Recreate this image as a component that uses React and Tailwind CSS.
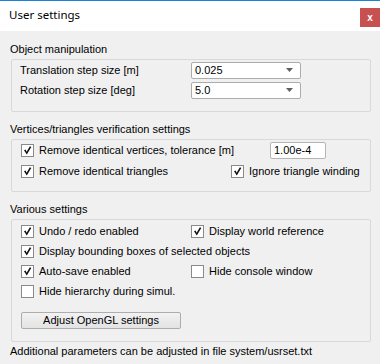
import React from "react";

function Check({ checked }) {
  return (
    <span className="w-[13px] h-[13px] shrink-0 bg-white border border-[#8a8a8a] flex items-center justify-center">
      {checked && (
        <svg width="11" height="11" viewBox="0 0 11 11">
          <polygon points="2,5.2 3.6,4.6 4.6,6.8 7.9,1.2 9.3,1.9 4.8,9.6" fill="#111" />
        </svg>
      )}
    </span>
  );
}

function CB({ checked, label, w }) {
  return (
    <div className={"flex items-center gap-[5px] " + (w || "")}>
      <Check checked={checked} />
      <span>{label}</span>
    </div>
  );
}

function Combo({ value }) {
  return (
    <div className="w-[110px] h-[17px] bg-white border border-[#acacac] rounded-[2px] flex items-center justify-between pl-[3px] pr-[7px]">
      <span>{value}</span>
      <svg width="7" height="4" viewBox="0 0 7 4">
        <polygon points="0,0 7,0 3.5,4" fill="#606060" />
      </svg>
    </div>
  );
}

export default function App() {
  return (
    <div className="w-[380px] h-[364px] bg-[#f0f0f0] text-[11px] leading-[13px] text-black font-['Liberation_Sans',Arial,sans-serif] overflow-hidden">
      <div className="h-[31px] border-t border-[#1883d7] bg-white flex items-start justify-between">
        <span className="font-['Noto_Sans',sans-serif] text-[11.5px] leading-[16px] mt-[6px] ml-[9px]">User settings</span>
        <div className="w-[20px] h-[19px] mt-[7px] bg-[#c75050] flex items-center justify-center text-white text-[10px] font-bold leading-none">
          x
        </div>
      </div>
      <div className="pl-[10px] pt-[12px] flex flex-col">
        <div>Object manipulation</div>
        <div className="mt-[3px] ml-[1px] w-[360px] border border-[#d9d9d9] rounded-[2px] pl-[8px] pb-[11px] flex flex-col">
          <div className="h-[20px] flex items-center">
            <span className="w-[171px]">Translation step size [m]</span>
            <Combo value="0.025" />
          </div>
          <div className="h-[20px] flex items-center">
            <span className="w-[171px]">Rotation step size [deg]</span>
            <Combo value="5.0" />
          </div>
        </div>

        <div className="mt-[11px]">Vertices/triangles verification settings</div>
        <div className="mt-[3px] ml-[1px] w-[360px] border border-[#d9d9d9] rounded-[2px] pl-[9px] pb-[10px] flex flex-col gap-[1px]">
          <div className="h-[20px] flex items-center">
            <CB checked label="Remove identical vertices, tolerance [m]" w="w-[249px]" />
            <div className="w-[56px] h-[17px] bg-white border border-[#b5b5b5] rounded-[2px] flex items-center pl-[3px]">1.00e-4</div>
          </div>
          <div className="h-[20px] flex items-center">
            <CB checked label="Remove identical triangles" w="w-[210px]" />
            <CB checked label="Ignore triangle winding" />
          </div>
        </div>

        <div className="mt-[11px]">Various settings</div>
        <div className="mt-[3px] ml-[1px] w-[360px] border border-[#d9d9d9] rounded-[2px] pl-[9px] pt-[1px] pb-[12px] flex flex-col">
          <div className="h-[20px] flex items-center">
            <CB checked label="Undo / redo enabled" w="w-[170px]" />
            <CB checked label="Display world reference" />
          </div>
          <div className="h-[20px] flex items-center">
            <CB checked label="Display bounding boxes of selected objects" />
          </div>
          <div className="h-[20px] flex items-center">
            <CB checked label="Auto-save enabled" w="w-[170px]" />
            <CB checked={false} label="Hide console window" />
          </div>
          <div className="h-[20px] flex items-center">
            <CB checked={false} label="Hide hierarchy during simul." />
          </div>
          <div className="mt-[11px] w-[160px] h-[17px] border border-[#adadad] rounded-[2px] bg-gradient-to-b from-[#f2f2f2] to-[#e3e3e3] flex items-center justify-center">
            Adjust OpenGL settings
          </div>
        </div>

        <div className="mt-[3px]">Additional parameters can be adjusted in file system/usrset.txt</div>
      </div>
    </div>
  );
}
